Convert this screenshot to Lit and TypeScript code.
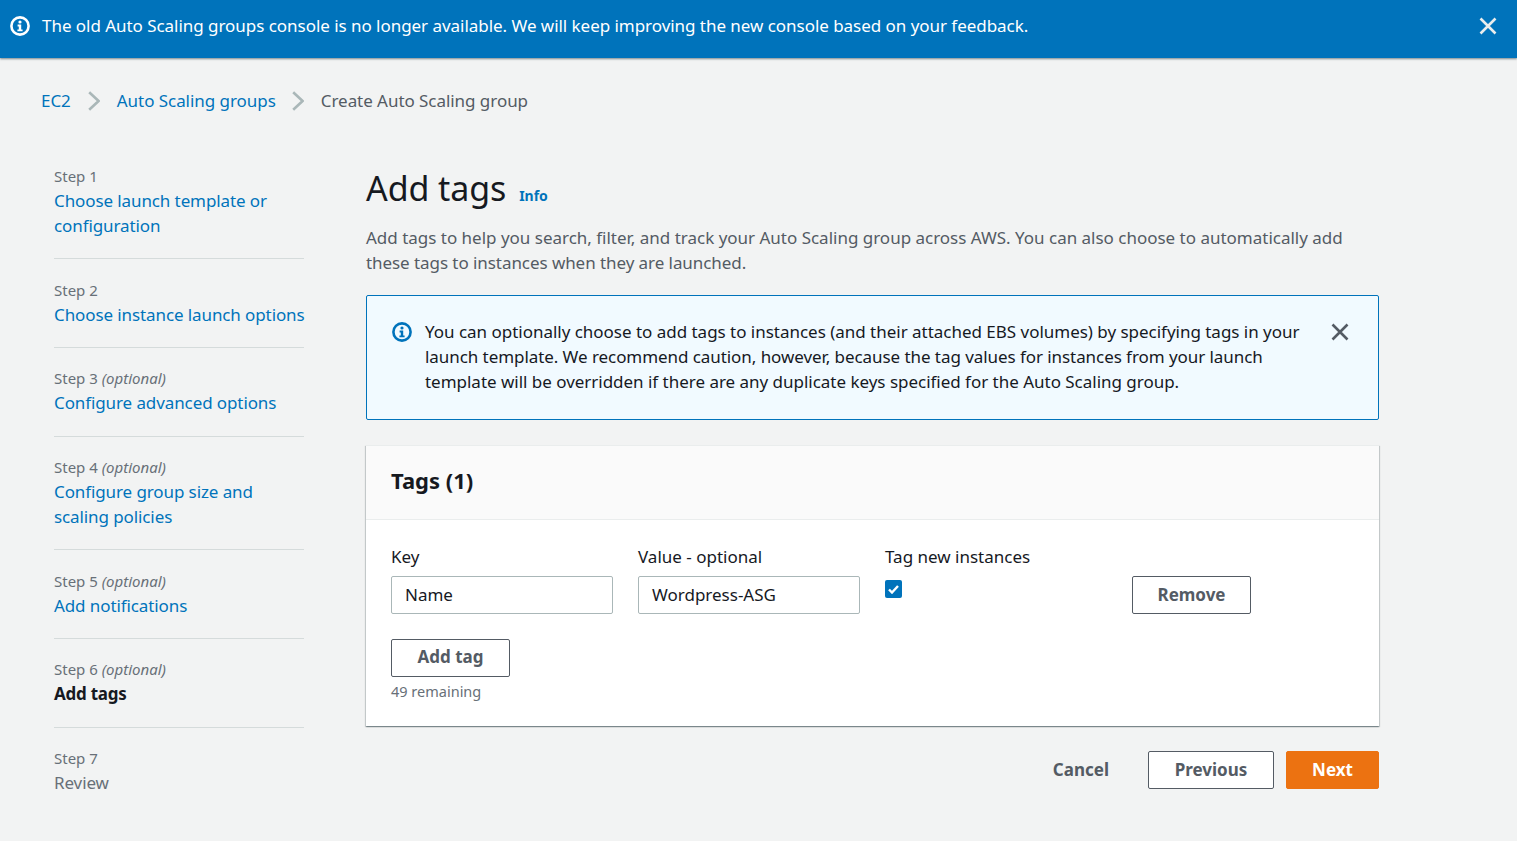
import { LitElement, html, css } from "lit";
import { customElement } from "lit/decorators.js";

const infoIcon = (color: string, size = 20) => html`<svg width=${size} height=${size} viewBox="0 0 20 20" fill="none">
  <circle cx="10" cy="10" r="8.6" stroke=${color} stroke-width="2.6"></circle>
  <circle cx="10" cy="6" r="1.6" fill=${color}></circle>
  <path d="M7.6 8.6h3.6v4.8h1.4v1.9H7.4v-1.9h1.4v-2.9H7.6z" fill=${color}></path>
</svg>`;

const closeIcon = (color: string) => html`<svg width="18" height="18" viewBox="0 0 18 18" fill="none">
  <path d="M1.5 1.5l15 15M16.5 1.5l-15 15" stroke=${color} stroke-width="2.6"></path>
</svg>`;

const chevron = html`<svg class="chev" width="12" height="20" viewBox="0 0 12 20" fill="none">
  <path d="M1.2 1.2L10.6 10l-9.4 8.8" stroke="#aab7b8" stroke-width="2.6"></path>
</svg>`;

const steps = [
  { step: "Step 1", opt: "", label: "Choose launch template or configuration", kind: "link", wrap: true },
  { step: "Step 2", opt: "", label: "Choose instance launch options", kind: "link" },
  { step: "Step 3", opt: "(optional)", label: "Configure advanced options", kind: "link" },
  { step: "Step 4", opt: "(optional)", label: "Configure group size and scaling policies", kind: "link", wrap: true },
  { step: "Step 5", opt: "(optional)", label: "Add notifications", kind: "link" },
  { step: "Step 6", opt: "(optional)", label: "Add tags", kind: "active" },
  { step: "Step 7", opt: "", label: "Review", kind: "muted" },
];

@customElement("app-root")
export class AppRoot extends LitElement {
  static styles = css`
    :host {
      display: block;
      height: 841px;
      overflow: hidden;
      background: #f2f3f3;
      font-family: "Noto Sans", sans-serif;
      font-size: 17px;
      line-height: 25px;
      color: #16191f;
    }
    .banner {
      height: 58px;
      box-sizing: border-box;
      background: #0073bb;
      color: #fff;
      display: flex;
      align-items: center;
      padding: 0 20px 6px 10px;
      box-shadow: 0 1px 2px rgba(0, 28, 36, 0.5);
      position: relative;
      letter-spacing: -0.04px;
    }
    .banner svg { flex: none; display: block; }
    .banner .msg { flex: 1; margin-left: 12px; padding-bottom: 2px; }
    .crumbs {
      display: flex;
      align-items: center;
      height: 25px;
      margin: 30px 0 0 41px;
      color: #545b64;
      letter-spacing: -0.05px;
    }
    .crumbs a:first-child { margin-right: 1px; }
    .chev { margin: 0 17px 0 16px; flex: none; }
    a { color: #0073bb; text-decoration: none; }
    .layout {
      display: flex;
      margin-top: 47px;
    }
    nav {
      width: 250px;
      margin-left: 54px;
      flex: none;
      margin-top: 6.15px;
      letter-spacing: -0.1px;
    }
    .navitem { padding-bottom: 20.33px; margin-bottom: 20.33px; border-bottom: 1px solid #d5dbdb; }
    .navitem:last-child { border-bottom: 0; margin-bottom: 0; }
    .navlink { display: block; }
    .nowrap { white-space: nowrap; }
    .wrap { width: 225px; }
    .stepno { font-size: 15px; line-height: 20px; margin-bottom: 2px; color: #687078; letter-spacing: 0; }
    .stepno i { font-style: italic; }
    .active { font-weight: 700; color: #16191f; letter-spacing: -0.25px; }
    .muted { color: #687078; }
    main { width: 1013px; margin-left: 62px; flex: none; padding-top: 8px; }
    .title { display: flex; align-items: baseline; }
    h1 { margin: 0 0 2px; font-size: 34px; line-height: 40px; font-weight: 400; color: #16191f; letter-spacing: -0.1px; }
    .info { font-size: 14px; font-weight: 700; margin-left: 13px; }
    .desc { margin: 15px 0 0; color: #545b64; letter-spacing: -0.01px; }
    .tight { letter-spacing: -0.065px; }
    .alert {
      margin-top: 20px;
      height: 125px;
      box-sizing: border-box;
      border: 1px solid #0073bb;
      border-radius: 2px;
      background: #f1faff;
      display: flex;
      padding: 23px 29px 0 25px;
      letter-spacing: -0.02px;
    }
    .alert .ic { flex: none; width: 20px; height: 25px; display: flex; align-items: center; margin-right: 13px; }
    .alert .text { width: 880px; flex: none; }
    .alert .x { margin-left: auto; height: 25px; display: flex; align-items: center; }
    .card {
      margin-top: 25px;
      background: #fff;
      box-shadow: 0 1px 1px 0 rgba(0, 28, 36, 0.3), 1px 1px 1px 0 rgba(0, 28, 36, 0.15), -1px 1px 1px 0 rgba(0, 28, 36, 0.15);
      border-top: 1px solid #eaeded;
    }
    .cardhead {
      height: 74px;
      box-sizing: border-box;
      background: #fafafa;
      border-bottom: 1px solid #eaeded;
      padding: 0 25px 5px;
      display: flex;
      align-items: center;
    }
    h2 { margin: 0; font-size: 22px; line-height: 30px; font-weight: 700; }
    .cardbody { padding: 24px 25px 24px; }
    .row { display: flex; }
    .field { width: 222px; margin-right: 25px; flex: none; }
    .label { display: block; line-height: 25px; margin-bottom: 7px; }
    .input {
      height: 38px;
      box-sizing: border-box;
      border: 1px solid #aab7b8;
      border-radius: 2px;
      padding: 0 13px 2px;
      display: flex;
      align-items: center;
      background: #fff;
    }
    .check {
      width: 17px;
      height: 18px;
      margin-top: 11px;
      background: #0073bb;
      border-radius: 2px;
      display: flex;
      align-items: center;
      justify-content: center;
    }
    .btn {
      height: 38px;
      box-sizing: border-box;
      border: 1px solid #545b64;
      border-radius: 2px;
      background: #fff;
      color: #545b64;
      font-weight: 700;
      display: flex;
      align-items: center;
      justify-content: center;
      padding-bottom: 2px;
    }
    .remove { width: 119px; margin-top: 32px; flex: none; }
    .add { width: 119px; margin-top: 25px; padding-bottom: 4px; }
    .remaining { font-size: 14.5px; line-height: 22px; color: #687078; margin-top: 3px; }
    .actions { display: flex; align-items: center; justify-content: flex-end; margin-top: 25px; }
    .cancel { color: #545b64; font-weight: 700; margin-right: 39px; padding-bottom: 2px; }
    .prev { width: 126px; margin-right: 12px; }
    .next { width: 93px; background: #ec7211; border-color: #ec7211; color: #fff; }
  `;

  render() {
    return html`
      <div class="banner">
        ${infoIcon("#fff")}
        <span class="msg">The old Auto Scaling groups console is no longer available. We will keep improving the new console based on your feedback.</span>
        ${closeIcon("#eaeded")}
      </div>
      <div class="crumbs">
        <a>EC2</a>${chevron}<a>Auto Scaling groups</a>${chevron}<span>Create Auto Scaling group</span>
      </div>
      <div class="layout">
        <nav>
          ${steps.map(
            (s) => html`<div class="navitem">
              <div class="stepno">${s.step}${s.opt ? html` <i>${s.opt}</i>` : ""}</div>
              ${s.kind === "link"
                ? html`<a class="navlink ${s.wrap ? "wrap" : "nowrap"}">${s.label}</a>`
                : html`<div class=${s.kind}>${s.label}</div>`}
            </div>`
          )}
        </nav>
        <main>
          <div class="title"><h1>Add tags</h1><a class="info">Info</a></div>
          <p class="desc">Add tags to help you search, filter, and track your Auto Scaling group across AWS. You can also choose to automatically add <span class="tight">these tags to instances when they are launched.</span></p>
          <div class="alert">
            <span class="ic">${infoIcon("#0073bb")}</span>
            <div class="text">You can optionally choose to add tags to instances (and their attached EBS volumes) by specifying tags in your <span class="tight">launch template. We recommend caution, however, because the tag values for instances from your launch</span> template will be overridden if there are any duplicate keys specified for the Auto Scaling group.</div>
            <span class="x">${closeIcon("#545b64")}</span>
          </div>
          <section class="card">
            <div class="cardhead"><h2>Tags (1)</h2></div>
            <div class="cardbody">
              <div class="row">
                <div class="field"><span class="label">Key</span><div class="input">Name</div></div>
                <div class="field"><span class="label">Value - optional</span><div class="input">Wordpress-ASG</div></div>
                <div class="field">
                  <span class="label">Tag new instances</span>
                  <div class="check">
                    <svg width="11" height="9" viewBox="0 0 11 9" fill="none"><path d="M1 4.5l3 3 6-6.5" stroke="#fff" stroke-width="2.4"></path></svg>
                  </div>
                </div>
                <div class="btn remove">Remove</div>
              </div>
              <div class="btn add">Add tag</div>
              <div class="remaining">49 remaining</div>
            </div>
          </section>
          <div class="actions">
            <span class="cancel">Cancel</span>
            <div class="btn prev">Previous</div>
            <div class="btn next">Next</div>
          </div>
        </main>
      </div>
    `;
  }
}
